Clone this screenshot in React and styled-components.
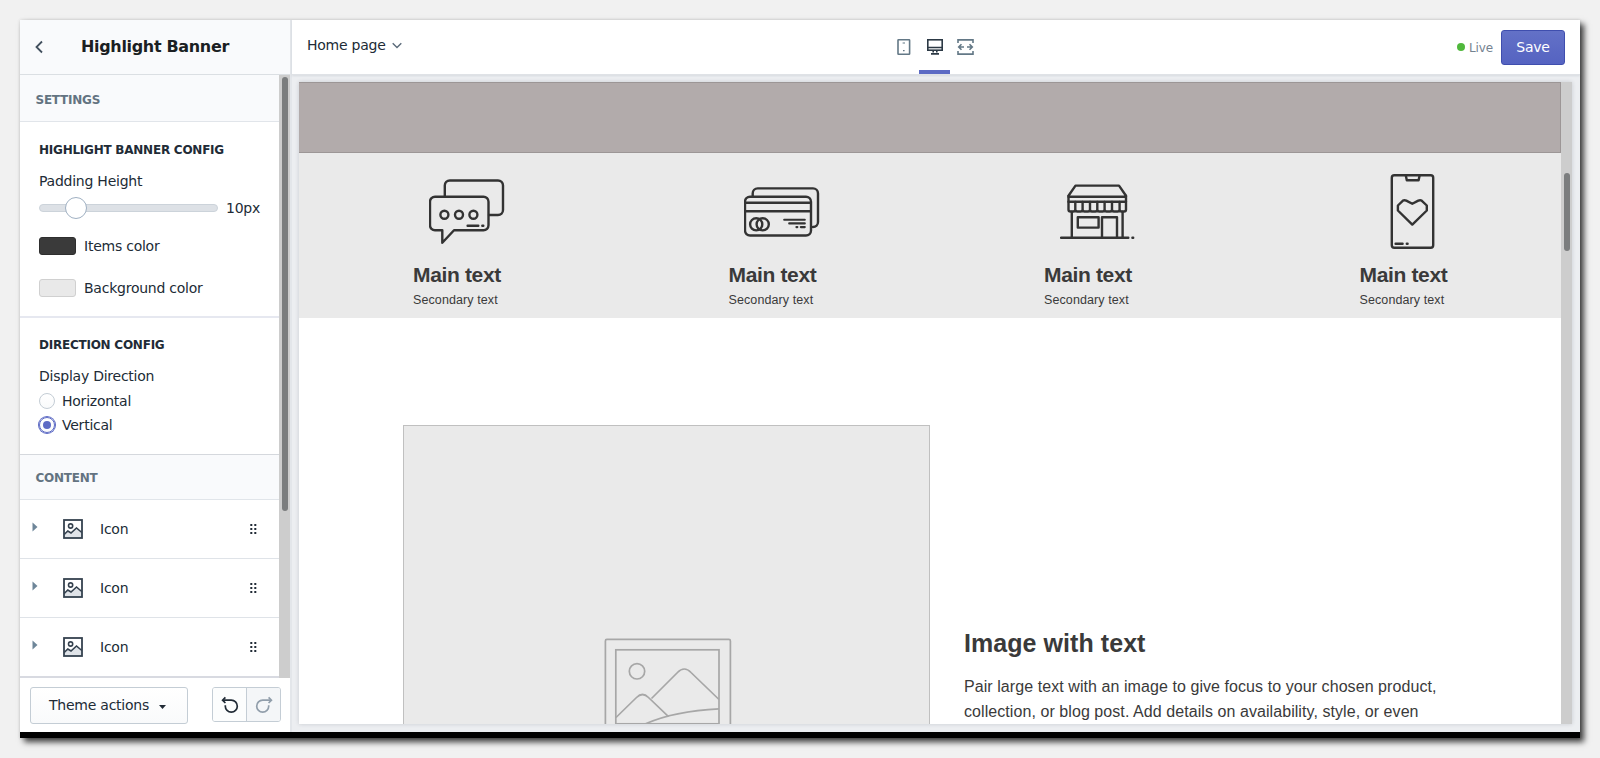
import React from "react";
import styled, { createGlobalStyle, css } from "styled-components";

const GlobalStyle = createGlobalStyle`
  *, *::before, *::after { box-sizing: border-box; }
  body {
    margin: 0;
    background: #f1f1f1;
    font-family: "DejaVu Sans", sans-serif;
    font-size: 14px;
    letter-spacing: -0.24px;
    color: #212b36;
    overflow: hidden;
  }
  svg { display: block; flex: none; }
`;

const Page = styled.div`
  height: 758px;
  padding: 20px;
`;

const Window = styled.div`
  display: flex;
  width: 1560px;
  height: 718px;
  background: #eceef1;
  border-bottom: 6px solid #000;
  box-shadow: 4px 4px 6px rgba(0, 0, 0, 0.75), 0 0 3px rgba(0, 0, 0, 0.12);
`;

/* ---------- Sidebar ---------- */

const Sidebar = styled.aside`
  display: flex;
  flex-direction: column;
  flex: none;
  width: 272px;
  background: #fff;
  border-right: 2px solid #e3e6ea;
`;

const SidebarHeader = styled.header`
  display: flex;
  align-items: center;
  flex: none;
  height: 55px;
  padding: 0 0 0 14px;
  background: #f9fafc;
  border-bottom: 1px solid #dbdfe3;
`;

const SidebarTitle = styled.h1`
  margin: 0 0 1px 37px;
  font-size: 16px;
  letter-spacing: -0.33px;
  line-height: 20px;
  font-weight: 700;
  color: #1b1f23;
  white-space: nowrap;
`;

const ScrollArea = styled.div`
  display: flex;
  flex: none;
  height: 603px;
`;

const Panel = styled.div`
  width: 259px;
  overflow: hidden;
  border-bottom: 2px solid #d8dae1;
`;

const ScrollTrack = styled.div`
  width: 11px;
  padding: ${(p) => p.$top}px 2px 0 3px;
  background: #cdcdcd;
`;

const ScrollThumb = styled.div`
  width: 6px;
  height: ${(p) => p.$height}px;
  border-radius: 3px;
  background: #7b7d7e;
`;

const GroupHeading = styled.h2`
  display: flex;
  align-items: center;
  margin: 0;
  height: ${(p) => p.$height}px;
  padding: ${(p) => p.$shift || 0}px 0 0 15.5px;
  background: #f9fafc;
  border-bottom: 1px solid #e1e5ea;
  font-size: 12px;
  font-weight: 700;
  color: #637381;
`;

const Section = styled.section`
  height: ${(p) => p.$height}px;
  padding: ${(p) => p.$top}px 19px 0 19px;
  border-bottom: ${(p) => (p.$last ? "1px solid #d5d8dd" : "2px solid #e6e8f0")};
`;

const SectionTitle = styled.h3`
  margin: 0;
  font-size: 12px;
  line-height: 16px;
  font-weight: 700;
  color: #212b36;
  white-space: nowrap;
`;

const FieldLabel = styled.div`
  margin: 13px 0 0;
  line-height: 20px;
`;

const SliderRow = styled.div`
  display: flex;
  align-items: center;
  gap: 8px;
  height: 24px;
  margin-top: 5px;
`;

const SliderTrack = styled.div`
  display: flex;
  align-items: center;
  flex: none;
  width: 179px;
  height: 8px;
  padding-left: 26px;
  border-radius: 4px;
  background: #dde1e6;
  border: 1px solid #ccd3da;
`;

const SliderThumb = styled.div`
  flex: none;
  width: 22px;
  height: 22px;
  margin-left: -1px;
  border-radius: 50%;
  background: #fff;
  border: 1px solid #9fb0c2;
`;

const ColorRow = styled.div`
  display: flex;
  align-items: center;
  gap: 8px;
  height: 20px;
  margin-top: ${(p) => p.$gap}px;
`;

const Swatch = styled.div`
  width: 37px;
  height: 18px;
  border-radius: 3px;
  background: ${(p) => p.$color};
  border: 1px solid ${(p) => p.$edge};
`;

const RadioList = styled.div`
  padding-top: 3px;
`;

const RadioRow = styled.div`
  display: flex;
  align-items: center;
  gap: 7px;
  height: 24px;
`;

const Radio = styled.div`
  display: flex;
  align-items: center;
  justify-content: center;
  width: 16px;
  height: 16px;
  border-radius: 50%;
  border: 1px solid #c4cdd5;
  background: linear-gradient(#fff, #f9fafb);
  ${(p) =>
    p.$checked &&
    css`
      border-color: #5c6ac4;
      box-shadow: 0 0 0 1px #5c6ac4;
      &::after {
        content: "";
        width: 8px;
        height: 8px;
        border-radius: 50%;
        background: #5c6ac4;
      }
    `}
`;

const BlockRow = styled.div`
  display: flex;
  align-items: center;
  height: 59px;
  padding: 0 22px 0 12px;
  border-bottom: 1px solid #dfe3e8;
`;

const Disclosure = styled.div`
  width: 31px;
  padding-bottom: 5px;
`;

const BlockName = styled.span`
  flex: 1;
  margin-left: 17px;
`;

const SidebarFooter = styled.footer`
  display: flex;
  align-items: flex-start;
  justify-content: space-between;
  flex: 1;
  padding: 9px 9px 0 10px;
`;

const ActionsButton = styled.div`
  display: flex;
  align-items: center;
  gap: 10px;
  width: 158px;
  height: 37px;
  padding: 0 0 2px 18px;
  border: 1px solid #c4cdd5;
  border-radius: 3px;
  background: linear-gradient(#fff, #f9fafb);
  svg { margin-top: 4px; }
`;

const HistoryGroup = styled.div`
  display: flex;
  width: 69px;
  height: 35px;
  overflow: hidden;
  border: 1px solid #c4cdd5;
  border-radius: 3px;
`;

const HistoryButton = styled.div`
  display: flex;
  align-items: center;
  justify-content: center;
  flex: 1;
  background: ${(p) => (p.$disabled ? "#f4f6f8" : "#fcfdfd")};
  & + & { border-left: 1px solid #c4cdd5; }
`;

/* ---------- Main ---------- */

const Main = styled.main`
  display: flex;
  flex-direction: column;
  flex: 1;
`;

const TopBar = styled.header`
  display: grid;
  grid-template-columns: 582px auto 1fr;
  height: 55px;
  padding: 0 15px 0 15px;
  background: #fff;
  border-bottom: 1px solid #dfe2e6;
  box-shadow: 0 1px 2px rgba(99, 115, 129, 0.15);
`;

const PagePicker = styled.div`
  display: flex;
  align-items: center;
  gap: 6px;
  padding-bottom: 4px;
`;

const Devices = styled.div`
  display: flex;
`;

const DeviceTab = styled.div`
  display: flex;
  align-items: center;
  justify-content: center;
  width: ${(p) => p.$width}px;
  border-bottom: 4px solid ${(p) => (p.$active ? "#5c6ac4" : "transparent")};
  padding-top: 4px;
`;

const Publish = styled.div`
  display: flex;
  align-items: center;
  justify-content: flex-end;
`;

const LiveDot = styled.span`
  width: 8px;
  height: 8px;
  margin-right: 4px;
  border-radius: 50%;
  background: #50b83c;
`;

const LiveText = styled.span`
  font-size: 12px;
  letter-spacing: -0.1px;
  color: #748290;
  margin: 1px 8px 0 0;
`;

const SaveButton = styled.div`
  display: flex;
  align-items: center;
  justify-content: center;
  width: 64px;
  height: 35px;
  border: 1px solid #3f4eae;
  border-radius: 3px;
  background: linear-gradient(#6371c7, #5563c1);
  color: #fff;
`;

const PreviewFrame = styled.div`
  display: flex;
  width: 1273px;
  height: 642px;
  margin: 7px 0 0 7px;
  background: #fff;
  box-shadow: 0 0 4px rgba(33, 43, 54, 0.18);
`;

const Storefront = styled.div`
  width: 1262px;
  overflow: hidden;
  font-family: "Liberation Sans", Arial, sans-serif;
  letter-spacing: 0;
  color: #3a3a3a;
`;

const Hero = styled.div`
  height: 71px;
  background: #b2abab;
  border: 1px solid #9c9696;
  border-width: 1px 1px 1px 0;
`;

const Highlights = styled.div`
  display: grid;
  grid-template-columns: repeat(4, 1fr);
  height: 165px;
  background: #eaeaea;
`;

const Highlight = styled.div`
  padding: 21px 0 0 114px;
  svg { margin-left: 15.8px; }
`;

const HighlightTitle = styled.div`
  margin-top: 12px;
  font-size: 21px;
  letter-spacing: -0.35px;
  line-height: 28px;
  font-weight: 700;
  white-space: nowrap;
`;

const HighlightText = styled.div`
  margin-top: 1px;
  font-size: 12.5px;
  letter-spacing: 0.1px;
  line-height: 20px;
  white-space: nowrap;
`;

const Feature = styled.div`
  display: flex;
  gap: 34px;
  padding: 107px 0 0 104px;
`;

const FeatureImage = styled.div`
  display: flex;
  justify-content: center;
  align-items: flex-start;
  width: 527px;
  height: 527px;
  padding: 212px 0 0 2px;
  border: 1px solid #c0c0c0;
  background: #eaeaea;
`;

const FeatureCopy = styled.div`
  padding-top: 201px;
`;

const FeatureTitle = styled.h2`
  margin: 0;
  font-size: 25px;
  letter-spacing: 0.06px;
  line-height: 34px;
  font-weight: 700;
`;

const FeatureText = styled.p`
  margin: 14px 0 0;
  font-size: 16px;
  letter-spacing: 0.07px;
  line-height: 25px;
  white-space: nowrap;
`;

/* ---------- Drawings ---------- */

const LineIcon = ({ children }) => (
  <svg width="76" height="75" viewBox="0 0 76 75" fill="none" stroke="#333" strokeWidth="2.4" strokeLinecap="round" strokeLinejoin="round">
    {children}
  </svg>
);

const ChatIcon = () => (
  <LineIcon>
    <path d="M15.8 22V11.5a5 5 0 0 1 5-5H69a5 5 0 0 1 5 5V36a5 5 0 0 1-5 5H60" />
    <path d="M6 22.7H54.5a5 5 0 0 1 5 5V51.3a5 5 0 0 1-5 5H25L13.3 68.8V56.3H6a5 5 0 0 1-5-5V27.7a5 5 0 0 1 5-5Z" />
    <circle cx="15.4" cy="40.7" r="4" />
    <circle cx="30" cy="40.7" r="4" />
    <circle cx="44.4" cy="40.7" r="4" />
    <path d="M38.6 51.8H49.3M53.3 51.8H54.3" />
  </LineIcon>
);

const CardsIcon = () => (
  <LineIcon>
    <path d="M8.7 22V19.4a5 5 0 0 1 5-5H69a5 5 0 0 1 5 5V48a5 5 0 0 1-5 5" />
    <rect x="1" y="22.7" width="66" height="38.8" rx="5" />
    <path d="M1.5 28.7H66.5M1.5 37.3H66.5" />
    <circle cx="12.2" cy="50.3" r="6.1" />
    <circle cx="18.7" cy="50.3" r="6.1" />
    <path d="M40.2 45.7H60.8M45.2 49.4H60.8M52.4 53.1H53.4M56.8 53.1H60.8" strokeWidth="2.1" />
  </LineIcon>
);

const StoreIcon = () => (
  <LineIcon>
    <path d="M8.5 21.8L15.5 11.6H59L66 21.8M8.5 22.8H66M8.5 27.8H66" />
    <path d="M8.5 22V35.5q0 2 2 2H13.3q2 0 2-2V28M15.3 35.5q0 2 2 2H20.6q2 0 2-2V28M22.6 35.5q0 2 2 2H28q2 0 2-2V28M30 35.5q0 2 2 2H35.3q2 0 2-2V28M37.3 35.5q0 2 2 2H42.6q2 0 2-2V28M44.6 35.5q0 2 2 2H50q2 0 2-2V28M52 35.5q0 2 2 2H57.6q2 0 2-2V28M59.6 35.5q0 2 2 2H64q2 0 2-2V22" />
    <path d="M11.8 38V63.5M62.6 38V63.5" />
    <rect x="17.8" y="43.2" width="20.8" height="10.4" />
    <path d="M42 63.5V43.2H57V63.5" />
    <path d="M1 63.7H68.3M72.4 63.7H73.2" />
  </LineIcon>
);

const PhoneIcon = () => (
  <LineIcon>
    <rect x="16.8" y="1.2" width="41.4" height="72.6" rx="2.5" />
    <path d="M30.8 1.5L31.8 6.3H43.6L44.6 1.5" />
    <path d="M37.3 50.6L22.9 36.5V31.5L28 26.6Q29.3 25.8 31.3 26.6L37.3 29.7L43.3 26.6Q45.3 25.8 46.6 26.6L51.8 31.5V36.5Z" />
    <path d="M20.6 69.8H27.6M31.8 69.8H32.6" />
  </LineIcon>
);

const PlaceholderArt = () => (
  <svg width="128" height="128" viewBox="0 0 128 128" fill="none" stroke="#a7a7a7" strokeWidth="1.7">
    <rect x="1.4" y="1.4" width="125" height="125" rx="1.5" />
    <rect x="11.8" y="11.8" width="103.2" height="74" />
    <circle cx="33" cy="33.3" r="7.7" />
    <path d="M47.5 60.5L73.5 34.5Q80.3 27.5 87 34.5L115 61.5" />
    <path d="M12 79.5L32.5 59.5Q38.5 53.5 44.5 59.5L64.5 78.7" />
    <path d="M41 86Q70 73 115 70.8" />
  </svg>
);

const ChevronLeft = () => (
  <svg width="10" height="14" viewBox="0 0 10 14" fill="none" stroke="#42505e" strokeWidth="1.8">
    <path d="M8 1.5L2.5 7L8 12.5" />
  </svg>
);

const ChevronDown = () => (
  <svg width="10" height="7" viewBox="0 0 10 7" fill="none" stroke="#5b6b7a" strokeWidth="1.4">
    <path d="M0.7 1.2L5 5.5L9.3 1.2" />
  </svg>
);

const Caret = () => (
  <svg width="6" height="10" viewBox="0 0 6 10" fill="#6e8699">
    <path d="M0.5 0.5L5.5 5L0.5 9.5Z" />
  </svg>
);

const CaretDown = () => (
  <svg width="7" height="4" viewBox="0 0 7 4" fill="#212b36">
    <path d="M0 0H7L3.5 4Z" />
  </svg>
);

const PictureIcon = () => (
  <svg width="20" height="20" viewBox="0 0 20 20" fill="none" stroke="#35424f" strokeWidth="1.6">
    <path d="M1 15L5 11L8 13L13.5 8.5L19 13.5V19H1Z" fill="#dfe3e8" stroke="none" />
    <path d="M1.2 15.5L4.8 12L8 14L13.5 9L18.8 13.5" />
    <circle cx="7.6" cy="7" r="2.1" />
    <rect x="1" y="1" width="18" height="18" strokeWidth="1.8" />
  </svg>
);

const DragHandle = () => (
  <svg width="7" height="10" viewBox="0 0 7 10" fill="#212b36">
    {[0, 4, 8].map((y) => (
      <path key={y} d={`M0.3 ${y}h2v2h-2zM4.3 ${y}h2v2h-2z`} />
    ))}
  </svg>
);

const UndoIcon = ({ color, flip }) => (
  <svg width="18" height="18" viewBox="0 0 18 18" fill="none" stroke={color} strokeWidth="1.7">
    <g transform={flip ? "translate(18 0) scale(-1 1)" : undefined}>
      <path d="M2 4.2H10.3A6 6 0 1 1 4.3 10.2V9.2" />
      <path d="M4.4 1.4L1.6 4.2L4.4 7" />
    </g>
  </svg>
);

const MobileIcon = () => (
  <svg width="14" height="16" viewBox="0 0 14 16" fill="none" stroke="#637886" strokeWidth="1.6">
    <rect x="1" y="0.8" width="11.6" height="14.4" rx="0.5" />
    <path d="M5.6 4H8M6 11.7H7.6" strokeWidth="1.2" />
  </svg>
);

const DesktopIcon = () => (
  <svg width="16" height="16" viewBox="0 0 16 16" fill="none" stroke="#2c3945" strokeWidth="1.6">
    <rect x="0.8" y="0.8" width="14.4" height="10.4" />
    <path d="M1 8.5H15M6.2 11.5V13.5M9.8 11.5V13.5M4 14.9H12" />
  </svg>
);

const FullWidthIcon = () => (
  <svg width="17" height="16" viewBox="0 0 17 16" fill="none" stroke="#637886" strokeWidth="1.6">
    <path d="M1 4V0.9H16V4M1 12V15.1H16V12" />
    <path d="M1.5 8H7M10 8H15.5M4.5 5.2L1.7 8L4.5 10.8M12.5 5.2L15.3 8L12.5 10.8" />
  </svg>
);

const highlightIcons = [ChatIcon, CardsIcon, StoreIcon, PhoneIcon];

export default function App() {
  return (
    <Page>
      <GlobalStyle />
      <Window>
        <Sidebar>
          <SidebarHeader>
            <ChevronLeft />
            <SidebarTitle>Highlight Banner</SidebarTitle>
          </SidebarHeader>
          <ScrollArea>
            <Panel>
              <GroupHeading $height={47} $shift={4}>SETTINGS</GroupHeading>
              <Section $height={196} $top={20}>
                <SectionTitle>HIGHLIGHT BANNER CONFIG</SectionTitle>
                <FieldLabel>Padding Height</FieldLabel>
                <SliderRow>
                  <SliderTrack>
                    <SliderThumb />
                  </SliderTrack>
                  <span>10px</span>
                </SliderRow>
                <ColorRow $gap={16}>
                  <Swatch $color="#3a3a3a" $edge="#2e2e2e" />
                  Items color
                </ColorRow>
                <ColorRow $gap={22}>
                  <Swatch $color="#e9e9e9" $edge="#d0d0d0" />
                  Background color
                </ColorRow>
              </Section>
              <Section $height={137} $top={19} $last>
                <SectionTitle>DIRECTION CONFIG</SectionTitle>
                <FieldLabel>Display Direction</FieldLabel>
                <RadioList>
                  <RadioRow>
                    <Radio />
                    Horizontal
                  </RadioRow>
                  <RadioRow>
                    <Radio $checked />
                    Vertical
                  </RadioRow>
                </RadioList>
              </Section>
              <GroupHeading $height={45} $shift={2}>CONTENT</GroupHeading>
              {[1, 2, 3].map((n) => (
                <BlockRow key={n}>
                  <Disclosure>
                    <Caret />
                  </Disclosure>
                  <PictureIcon />
                  <BlockName>Icon</BlockName>
                  <DragHandle />
                </BlockRow>
              ))}
            </Panel>
            <ScrollTrack $top={2}>
              <ScrollThumb $height={434} />
            </ScrollTrack>
          </ScrollArea>
          <SidebarFooter>
            <ActionsButton>
              Theme actions
              <CaretDown />
            </ActionsButton>
            <HistoryGroup>
              <HistoryButton>
                <UndoIcon color="#212b36" />
              </HistoryButton>
              <HistoryButton $disabled>
                <UndoIcon color="#919eab" flip />
              </HistoryButton>
            </HistoryGroup>
          </SidebarFooter>
        </Sidebar>
        <Main>
          <TopBar>
            <PagePicker>
              Home page
              <ChevronDown />
            </PagePicker>
            <Devices>
              <DeviceTab $width={30}>
                <MobileIcon />
              </DeviceTab>
              <DeviceTab $width={31} $active>
                <DesktopIcon />
              </DeviceTab>
              <DeviceTab $width={30}>
                <FullWidthIcon />
              </DeviceTab>
            </Devices>
            <Publish>
              <LiveDot />
              <LiveText>Live</LiveText>
              <SaveButton>Save</SaveButton>
            </Publish>
          </TopBar>
          <PreviewFrame>
            <Storefront>
              <Hero />
              <Highlights>
                {highlightIcons.map((Art, i) => (
                  <Highlight key={i}>
                    <Art />
                    <HighlightTitle>Main text</HighlightTitle>
                    <HighlightText>Secondary text</HighlightText>
                  </Highlight>
                ))}
              </Highlights>
              <Feature>
                <FeatureImage>
                  <PlaceholderArt />
                </FeatureImage>
                <FeatureCopy>
                  <FeatureTitle>Image with text</FeatureTitle>
                  <FeatureText>
                    Pair large text with an image to give focus to your chosen product,
                    <br />
                    collection, or blog post. Add details on availability, style, or even
                  </FeatureText>
                </FeatureCopy>
              </Feature>
            </Storefront>
            <ScrollTrack $top={91}>
              <ScrollThumb $height={78} />
            </ScrollTrack>
          </PreviewFrame>
        </Main>
      </Window>
    </Page>
  );
}
